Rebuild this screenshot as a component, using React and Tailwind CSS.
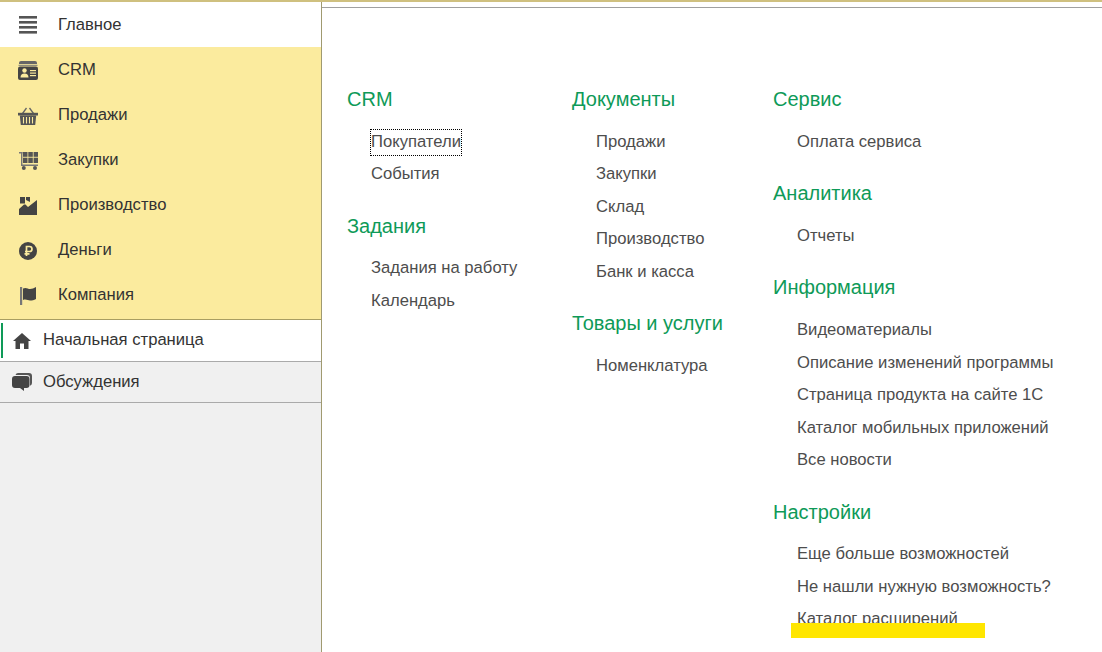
import React from "react";

// sidebar icons, drawn by hand to follow the reference
const MenuIcon = () => (
  <svg width="20" height="20" viewBox="0 0 20 20" fill="#555">
    <rect x="1" y="1" width="18" height="2.6" />
    <rect x="1" y="6" width="18" height="2.6" />
    <rect x="1" y="11" width="18" height="2.6" />
    <rect x="1" y="16" width="18" height="2.6" />
  </svg>
);

const CrmIcon = () => (
  <svg width="20" height="19" viewBox="0 0 20 19">
    <path d="M3 0h14a2 2 0 0 1 2 2v1H1V2a2 2 0 0 1 2-2z" fill="#666" />
    <rect x="0.500" y="3.800" width="19" height="1" fill="#777" />
    <rect x="0" y="5.500" width="20" height="13.500" rx="2" fill="#444" />
    <circle cx="6.500" cy="9.500" r="2.200" fill="#fbeb9e" />
    <path d="M2.500 16.500c0-2.800 1.500-4 4-4s4 1.200 4 4z" fill="#fbeb9e" />
    <rect x="12" y="9" width="6" height="1.200" fill="#fbeb9e" />
    <rect x="12" y="11.500" width="6" height="1.200" fill="#fbeb9e" />
    <rect x="12" y="14" width="6" height="1.200" fill="#fbeb9e" />
  </svg>
);

const BasketIcon = () => (
  <svg width="20" height="18" viewBox="0 0 20 18">
    <path d="M4.500 6.500L8.500 1M15.500 6.500L11.500 1" stroke="#666" strokeWidth="1.300" fill="none" />
    <rect x="0" y="5.800" width="20" height="2.700" fill="#555" />
    <path d="M1.800 8.500h16.400l-1 9.500H2.800z" fill="#555" />
    <path d="M5.500 10v6.500M8.500 10v6.500M11.500 10v6.500M14.500 10v6.500" stroke="#fbeb9e" strokeWidth="1.100" />
  </svg>
);

const CartIcon = () => (
  <svg width="19" height="18" viewBox="0 0 19 18" fill="#555">
    <rect x="0" y="0" width="3.500" height="1.500" fill="#777" />
    <rect x="2" y="0" width="1.400" height="14" fill="#777" />
    <rect x="2" y="12.500" width="17" height="1.500" fill="#777" />
    <rect x="4" y="0" width="4.500" height="4.800" />
    <rect x="9.300" y="0" width="4.500" height="4.800" />
    <rect x="14.600" y="0" width="4.400" height="4.800" />
    <rect x="4" y="5.700" width="4.500" height="5.300" />
    <rect x="9.300" y="5.700" width="4.500" height="5.300" />
    <rect x="14.600" y="5.700" width="4.400" height="5.300" />
    <circle cx="4.800" cy="16" r="2" />
    <circle cx="16" cy="16" r="2" />
  </svg>
);

const FactoryIcon = () => (
  <svg width="18" height="18" viewBox="0 0 18 18" fill="#444">
    <path d="M1 0h5v6.500H1zM7 0h4v5L7 3z" />
    <path d="M0 18v-6l5-4.500h1.500L9 10l9-7v15z" />
  </svg>
);

const MoneyIcon = () => (
  <svg width="18" height="18" viewBox="0 0 18 18">
    <circle cx="9" cy="9" r="9" fill="#444" />
    <path d="M7.500 14V4.500h3a2.500 2.500 0 0 1 0 5h-4.500M5.500 11.800h5" stroke="#fbeb9e" strokeWidth="1.700" fill="none" />
  </svg>
);

const FlagIcon = () => (
  <svg width="16" height="18" viewBox="0 0 16 18">
    <rect x="0" y="0" width="2.200" height="18" fill="#777" />
    <path d="M3 1.500c3-1.500 5 .5 7 .5 2 0 4-.8 6-2v12c-2 1.200-4 1.500-6 1.500s-4-1.800-7-.5z" fill="#444" />
  </svg>
);

const HomeIcon = () => (
  <svg width="18" height="16" viewBox="0 0 18 16" fill="#444">
    <path d="M9 0l9 8h-2.500v8H11v-5.500H7V16H2.500V8H0z" />
  </svg>
);

const ChatIcon = () => (
  <svg width="20" height="18" viewBox="0 0 20 18">
    <path d="M6 0h11a3 3 0 0 1 3 3v7a3 3 0 0 1-2 2.800V5a3 3 0 0 0-3-3H3.500A3 3 0 0 1 6 0z" fill="#555" />
    <path d="M3 3h11.500a3 3 0 0 1 3 3v6a3 3 0 0 1-3 3H12v3l-4-3H3a3 3 0 0 1-3-3V6a3 3 0 0 1 3-3z" fill="#444" />
  </svg>
);

const sections = [
  { label: "CRM", icon: <CrmIcon /> },
  { label: "Продажи", icon: <BasketIcon /> },
  { label: "Закупки", icon: <CartIcon /> },
  { label: "Производство", icon: <FactoryIcon /> },
  { label: "Деньги", icon: <MoneyIcon /> },
  { label: "Компания", icon: <FlagIcon /> },
];

const columns = [
  {
    width: "w-[225px]",
    groups: [
      { title: "CRM", items: ["Покупатели", "События"] },
      { title: "Задания", items: ["Задания на работу", "Календарь"] },
    ],
  },
  {
    width: "w-[201px]",
    groups: [
      { title: "Документы", items: ["Продажи", "Закупки", "Склад", "Производство", "Банк и касса"] },
      { title: "Товары и услуги", items: ["Номенклатура"] },
    ],
  },
  {
    width: "w-[329px]",
    groups: [
      { title: "Сервис", items: ["Оплата сервиса"] },
      { title: "Аналитика", items: ["Отчеты"] },
      { title: "Информация", items: ["Видеоматериалы", "Описание изменений программы", "Страница продукта на сайте 1С", "Каталог мобильных приложений", "Все новости"] },
      { title: "Настройки", items: ["Еще больше возможностей", "Не нашли нужную возможность?", "Каталог расширений"] },
    ],
  },
];

const Sidebar = () => (
  <div className="flex w-[322px] shrink-0 flex-col border-r border-[#a09a70] bg-[#f0f0f0] text-[16.64px] text-[#333]">
    {/* Section panel */}
    <div className="flex h-[45px] items-center bg-white pt-[2px]">
      <div className="flex w-[58px] justify-center pb-[2px] pr-[3px]"><MenuIcon /></div>
      <span>Главное</span>
    </div>
    <div className="h-[273px] border-b border-[#a89e62] bg-[#fbeb9e] pt-[1px]">
      {sections.map((s) => (
        <div key={s.label} className="flex h-[45px] items-center">
          <div className="flex w-[58px] justify-center pr-[2px]">{s.icon}</div>
          <span>{s.label}</span>
        </div>
      ))}
    </div>
    {/* Open windows */}
    <div className="flex h-[42px] items-center border-b border-[#aaa] bg-white py-[3px] pl-[1px]">
      <div className="h-full w-[2px] bg-[#0e9a58]" />
      <div className="flex w-[40px] justify-center pr-[3px]"><HomeIcon /></div>
      <span>Начальная страница</span>
    </div>
    <div className="flex h-[41px] items-center border-b border-[#aaa]">
      <div className="flex w-[43px] justify-center"><ChatIcon /></div>
      <span>Обсуждения</span>
    </div>
  </div>
);

const Column = ({ column }) => (
  <div className={`${column.width} shrink-0`}>
    {column.groups.map((group, i) => (
      <div key={group.title} className={i > 0 ? "mt-[20.7px]" : ""}>
        <h2 className="mb-[13px] flex h-[28px] items-center whitespace-nowrap text-[20px] text-[#0e9a58]">{group.title}</h2>
        {group.items.map((item) => (
          <div key={item} className="flex h-[32.5px] items-center whitespace-nowrap pl-[24px] text-[16.64px] text-[#4d4d4d]">
            {item === "Покупатели" ? (
              <span className="-m-[1px] border border-dotted border-black">{item}</span>
            ) : (
              item
            )}
          </div>
        ))}
      </div>
    ))}
  </div>
);

export default function App() {
  return (
    <div className="relative flex h-[652px] w-[1102px] flex-col overflow-hidden bg-white font-['Liberation_Sans',Arial,sans-serif]">
      <div className="h-[2px] shrink-0 bg-[#cfc07f]" />
      <div className="flex min-h-0 flex-1">
        <Sidebar />
        <div className="min-w-0 flex-1">
          <div className="mt-[5px] h-[1px] bg-[#a0a0a0]" />
          <div className="flex pl-[25px] pt-[77px]">
            {columns.map((column, i) => (
              <Column key={i} column={column} />
            ))}
          </div>
        </div>
      </div>
      {/* hand-drawn marker over the last link */}
      <div className="absolute left-[791px] top-[623px] h-[15px] w-[194px] bg-[#ffe600]" />
    </div>
  );
}
